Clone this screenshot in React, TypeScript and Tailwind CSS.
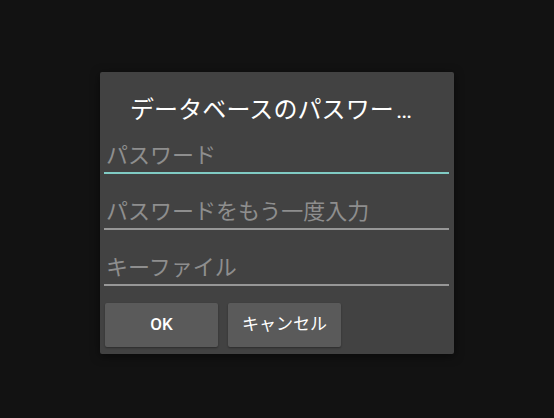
import React from "react";

const fontStack = "font-['Roboto','Noto_Sans_CJK_JP',sans-serif]";

function Field({ hint, focused }: { hint: string; focused?: boolean }) {
  return (
    <div className="ml-[4px] mr-[5px]">
      <div className="pl-[2px] text-[22px] leading-[28px] text-[#8e8e8e]">{hint}</div>
      <div className={`mt-[2px] h-[2px] ${focused ? "bg-[#80cbc4]" : "bg-[#979797]"}`} />
    </div>
  );
}

function DialogButton({ label, bold }: { label: string; bold?: boolean }) {
  return (
    <button
      type="button"
      className={`flex h-[44px] w-[113px] items-center justify-center rounded-[2px] bg-[#5a5a5a] text-[17px] text-white shadow-[0_1px_2px_rgba(0,0,0,0.35)] ${
        bold ? "font-medium" : "font-normal"
      }`}
    >
      {label}
    </button>
  );
}

export default function App() {
  return (
    <div className={`flex min-h-screen w-full justify-center bg-[#121212] pt-[72px] ${fontStack}`}>
      <div className="flex h-[282px] w-[354px] flex-col rounded-[2px] bg-[#424242] shadow-[0_2px_10px_rgba(0,0,0,0.5)]">
        <h2 className="whitespace-nowrap pl-[30px] pt-[22px] text-[24px] leading-[32px] font-normal tracking-[0.1px] text-white">
          データベースのパスワー<span className="ml-[2px]">…</span>
        </h2>

        <div className="mt-[16px] flex flex-col gap-[24px]">
          <Field hint="パスワード" focused />
          <Field hint="パスワードをもう一度入力" />
          <Field hint="キーファイル" />
        </div>

        <div className="mt-[17px] flex gap-[10px] pl-[5px]">
          <DialogButton label="OK" bold />
          <DialogButton label="キャンセル" />
        </div>
      </div>
    </div>
  );
}
